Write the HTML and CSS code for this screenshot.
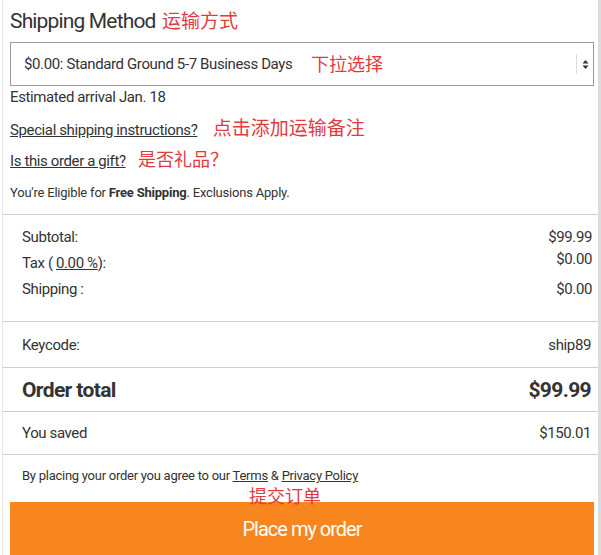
FILE: index.html
```html
<!DOCTYPE html>
<html>
    <head>
        <meta charset="utf-8" />
        <title>Checkout - Shipping</title>
        <link rel="stylesheet" href="styles.css">
    </head>
    <body>
        <div class="panel">
            <div class="shipping">
                <h2 class="title">Shipping Method <span class="note note-title">运输方式</span></h2>
                <div class="select-wrap">
                    <select class="ship-select" name="shipping">
                        <option>$0.00: Standard Ground 5-7 Business Days</option>
                    </select>
                    <span class="note note-select">下拉选择</span>
                    <span class="select-arrow">
                        <svg width="7" height="11" viewBox="0 0 7 11">
                            <path d="M0.5 4.5 L3.5 1 L6.5 4.5 Z M0.5 6.5 L3.5 10 L6.5 6.5 Z" fill="#333"/>
                        </svg>
                    </span>
                </div>
                <p class="arrival">Estimated arrival Jan. 18</p>
                <p class="ship-link"><a href="#">Special shipping instructions?</a> <span class="note note-link">点击添加运输备注</span></p>
                <p class="ship-link"><a href="#">Is this order a gift?</a> <span class="note note-gift">是否礼品？</span></p>
                <p class="eligible">You're Eligible for <b>Free Shipping</b>. Exclusions Apply.</p>
            </div>
            <div class="summary">
                <div class="row">
                    <span>Subtotal:</span>
                    <span>$99.99</span>
                </div>
                <div class="row">
                    <span>Tax ( <u>0.00 %</u>):</span>
                    <span class="tax-val">$0.00</span>
                </div>
                <div class="row">
                    <span>Shipping :</span>
                    <span>$0.00</span>
                </div>
            </div>
            <div class="line-row keycode">
                <span>Keycode:</span>
                <span>ship89</span>
            </div>
            <div class="line-row total">
                <span>Order total</span>
                <span>$99.99</span>
            </div>
            <div class="line-row saved">
                <span>You saved</span>
                <span>$150.01</span>
            </div>
            <div class="place">
                <p class="terms">By placing your order you agree to our <a href="#">Terms</a> &amp; <a href="#">Privacy Policy</a></p>
                <p class="note note-submit">提交订单</p>
                <button type="button" class="place-btn">Place my order</button>
            </div>
        </div>
    </body>
</html>
```

FILE: styles.css
```css
* {
	padding: 0;
	margin: 0;
	box-sizing: border-box;
}
body {
	font-family: Roboto, "Liberation Sans", "Noto Sans CJK SC", sans-serif;
	color: #333;
	background-color: #fff;
	letter-spacing: -0.024em;
}
.panel {
	width: 600px;
	height: 555px;
	overflow: hidden;
	margin-left: 2px;
	border-left: 1px solid #e6e6e6;
	border-right: 4px solid #dcdcdc;
}
.note {
	font-family: "Noto Sans CJK SC", sans-serif;
	color: #e23a3f;
	font-weight: normal;
	letter-spacing: 0;
	line-height: 1;
}
.shipping {
	padding: 8px 0 6px 7px;
	border-bottom: 1px solid #cfcfcf;
}
.title {
	font-size: 21px;
	font-weight: normal;
	line-height: 26px;
	height: 26px;
	margin-bottom: 8px;
	letter-spacing: -0.04em;
}
.note-title {
	font-size: 19px;
	margin-left: 2px;
}
.select-wrap {
	position: relative;
	width: 584px;
	height: 44px;
}
.ship-select {
	appearance: none;
	-webkit-appearance: none;
	width: 100%;
	height: 44px;
	border: 1px solid #9a9a9a;
	border-radius: 0;
	background-color: #fff;
	padding-left: 13px;
	font-family: Roboto, "Liberation Sans", sans-serif;
	font-size: 15px;
	letter-spacing: -0.025em;
	color: #333;
}
.note-select {
	position: absolute;
	left: 301px;
	top: 12px;
	font-size: 18px;
	pointer-events: none;
}
.select-arrow {
	position: absolute;
	right: 1px;
	top: 12px;
	width: 17px;
	height: 20px;
	border-left: 1px solid #ddd;
	display: flex;
	align-items: center;
	justify-content: center;
	pointer-events: none;
}
.arrival {
	font-size: 15px;
	line-height: 22px;
	margin-bottom: 7px;
}
.ship-link {
	font-size: 15px;
	line-height: 31px;
	height: 31px;
}
.ship-link a {
	color: #333;
}
.note-link {
	font-size: 19px;
	margin-left: 12px;
}
.note-gift {
	font-size: 18px;
	margin-left: 9px;
}
.eligible {
	font-size: 13px;
	line-height: 31px;
	letter-spacing: -0.016em;
}
.summary {
	padding: 9px 6px 19px 19px;
	border-bottom: 1px solid #cfcfcf;
}
.row {
	display: flex;
	justify-content: space-between;
	font-size: 15px;
	line-height: 26px;
}
.tax-val {
	line-height: 18px;
}
.line-row {
	display: flex;
	justify-content: space-between;
	align-items: center;
	padding: 0 7px 0 19px;
	border-bottom: 1px solid #cfcfcf;
	font-size: 15px;
}
.keycode {
	height: 46px;
}
.total {
	height: 44px;
	font-size: 21px;
	font-weight: bold;
	letter-spacing: -0.03em;
}
.saved {
	height: 43px;
}
.place {
	padding-top: 11px;
}
.terms {
	font-size: 13px;
	line-height: 20px;
	padding-left: 19px;
	letter-spacing: -0.02em;
}
.terms a {
	color: #333;
}
.note-submit {
	font-size: 18px;
	height: 16px;
	padding-left: 246px;
}
.place-btn {
	display: block;
	width: 584px;
	height: 54px;
	margin-left: 7px;
	border: 0;
	background-color: #f7861f;
	color: #fff;
	font-family: Roboto, "Liberation Sans", sans-serif;
	font-size: 20px;
	letter-spacing: -0.05em;
}
```
